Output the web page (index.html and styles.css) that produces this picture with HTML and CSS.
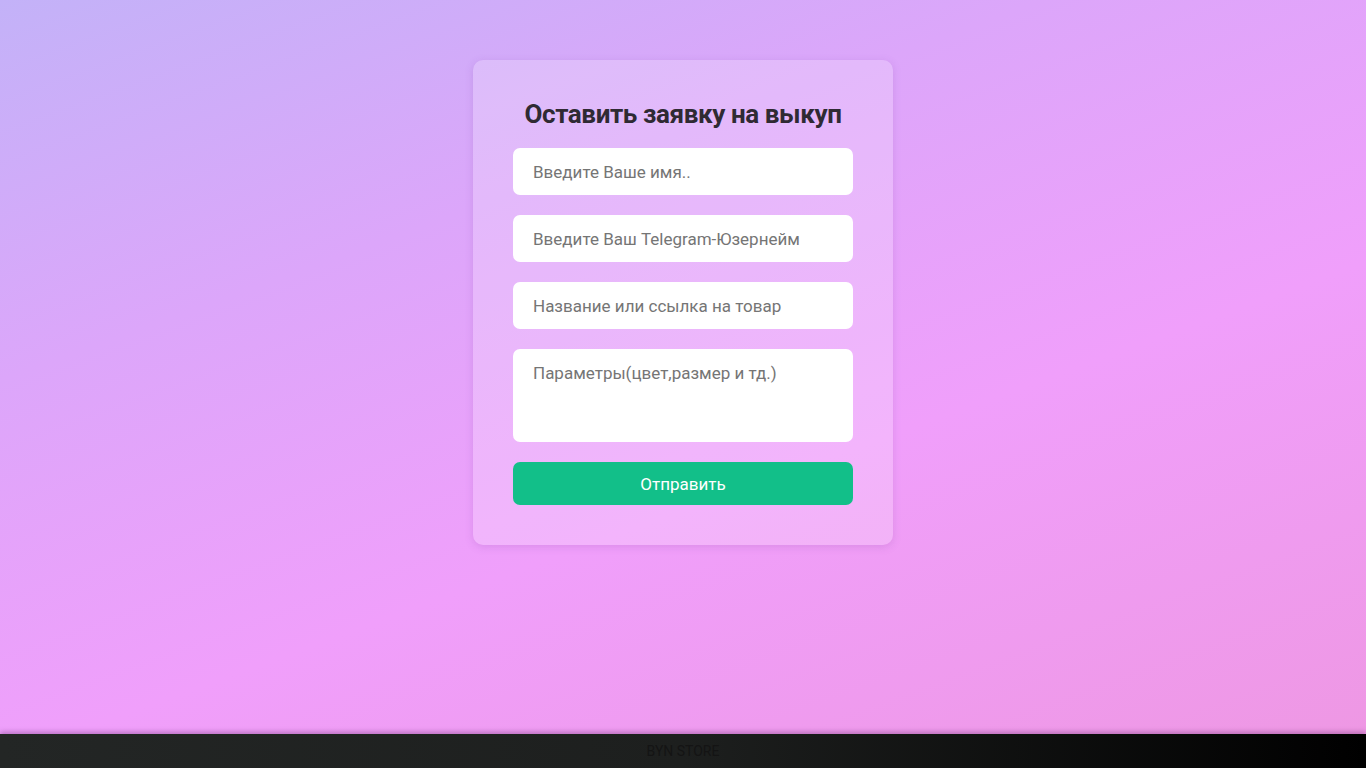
FILE: index.html
```html
<!DOCTYPE html>
<html lang="ru">
<head>
<meta charset="utf-8">
<title>BYN STORE</title>
<link rel="stylesheet" href="styles.css">
</head>
<body>
<main class="page">
  <form class="card">
    <h2 class="title">Оставить заявку на выкуп</h2>
    <input class="field" type="text" placeholder="Введите Ваше имя..">
    <input class="field" type="text" placeholder="Введите Ваш Telegram-Юзернейм">
    <input class="field" type="text" placeholder="Название или ссылка на товар">
    <textarea class="field area" placeholder="Параметры(цвет,размер и тд.)"></textarea>
    <button class="submit" type="button">Отправить</button>
  </form>
</main>
<footer class="footer">BYN STORE</footer>
</body>
</html>
```
FILE: styles.css
```css
* { box-sizing: border-box; }
html, body { margin: 0; height: 100%; }
body {
  font-family: Roboto, "Noto Sans", sans-serif;
  display: flex;
  flex-direction: column;
  background: linear-gradient(160deg, #c3b2f8 0%, #dca6fa 30%, #f09ffb 60%, #ee97e2 100%);
  overflow: hidden;
}
.page {
  flex: 1;
  display: flex;
  justify-content: center;
  align-items: flex-start;
  padding-top: 60px;
}
.card {
  width: 420px;
  padding: 40px;
  display: flex;
  flex-direction: column;
  gap: 20px;
  border-radius: 10px;
  background: rgba(255, 255, 255, 0.22);
  box-shadow: 0 2px 8px rgba(120, 60, 160, 0.18);
}
.title {
  margin: 0;
  text-align: center;
  white-space: nowrap;
  font-size: 26px;
  letter-spacing: -0.4px;
  line-height: 28px;
  font-weight: 700;
  color: #2f2a33;
}
.field {
  display: block;
  width: 100%;
  height: 47px;
  border: none;
  border-radius: 7px;
  background: #fff;
  padding: 0 20px;
  font-family: inherit;
  font-size: 17px;
  color: #333;
  outline: none;
}
.field::placeholder { color: #757575; }
.area {
  height: 93px;
  padding-top: 14px;
  resize: none;
}
.submit {
  height: 43px;
  border: none;
  border-radius: 7px;
  background: #12bf89;
  color: #fff;
  font-family: inherit;
  font-size: 17px;
}
.footer {
  height: 34px;
  flex: none;
  display: flex;
  align-items: center;
  justify-content: center;
  background: linear-gradient(90deg, #232625 0%, #1d1f1e 50%, #000 100%);
  color: #141414;
  font-size: 14px;
  box-shadow: 0 -2px 5px rgba(80, 30, 90, 0.35);
}
```
